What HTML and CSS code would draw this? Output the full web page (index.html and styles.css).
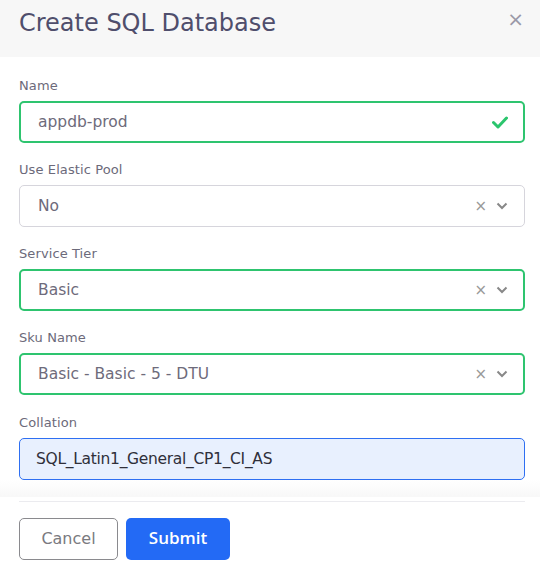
FILE: index.html
```html
<!DOCTYPE html>
<html>
<head>
<meta charset="utf-8">
<link rel="stylesheet" href="styles.css">
</head>
<body>
<div class="modal">
  <div class="header">
    <h1 class="title">Create SQL Database</h1>
    <span class="close">×</span>
  </div>
  <div class="body">
    <div class="field">
      <label class="label">Name</label>
      <div class="control valid">
        <span class="value">appdb-prod</span>
        <svg class="check" width="16" height="13" viewBox="0 0 16 13"><path d="M1.5 6.5 L6 11 L14.5 2" fill="none" stroke="#2bc56d" stroke-width="3" stroke-linecap="round" stroke-linejoin="round"/></svg>
      </div>
    </div>
    <div class="field">
      <label class="label">Use Elastic Pool</label>
      <div class="control">
        <span class="value">No</span>
        <span class="icons"><span class="clear">×</span><svg width="12" height="8" viewBox="0 0 12 8"><path d="M1.5 1.5 L6 6 L10.5 1.5" fill="none" stroke="#888" stroke-width="2"/></svg></span>
      </div>
    </div>
    <div class="field">
      <label class="label">Service Tier</label>
      <div class="control valid">
        <span class="value">Basic</span>
        <span class="icons"><span class="clear">×</span><svg width="12" height="8" viewBox="0 0 12 8"><path d="M1.5 1.5 L6 6 L10.5 1.5" fill="none" stroke="#888" stroke-width="2"/></svg></span>
      </div>
    </div>
    <div class="field wide">
      <label class="label">Sku Name</label>
      <div class="control valid">
        <span class="value">Basic - Basic - 5 - DTU</span>
        <span class="icons"><span class="clear">×</span><svg width="12" height="8" viewBox="0 0 12 8"><path d="M1.5 1.5 L6 6 L10.5 1.5" fill="none" stroke="#888" stroke-width="2"/></svg></span>
      </div>
    </div>
    <div class="field">
      <label class="label">Collation</label>
      <div class="control autofill">
        <span class="value dark narrow">SQL_Latin1_General_CP1_CI_AS</span>
      </div>
    </div>
    <div class="fade"></div>
  </div>
  <div class="footer">
    <button class="btn cancel">Cancel</button>
    <button class="btn submit">Submit</button>
  </div>
</div>
</body>
</html>
```
FILE: styles.css
```css
* { box-sizing: border-box; }
html, body { margin: 0; padding: 0; background: #fff; }
body { font-family: "DejaVu Sans", "Noto Sans", sans-serif; width: 540px; height: 586px; overflow: hidden; }
.modal { width: 540px; }
.header {
  height: 57px;
  background: #f7f7f7;
  display: flex;
  align-items: flex-start;
  justify-content: space-between;
  padding: 8px 16px 0 19px;
}
.title { margin: 0; font-size: 24px; font-weight: 400; color: #4f4e6c; line-height: 30px; }
.close { color: #9a99a8; font-size: 20px; line-height: 20px; margin-top: 1px; }
.body { padding: 19px 15px 0 19px; }
.field { margin-bottom: 17px; }
.field.wide { margin-bottom: 18px; }
.label { display: block; font-size: 13px; line-height: 18px; padding-top: 1px; color: #6c6a7a; margin-bottom: 6px; letter-spacing: 0.1px; }
.control {
  height: 42px;
  border: 1px solid #d6d5dc;
  border-radius: 5px;
  display: flex;
  align-items: center;
  justify-content: space-between;
  padding: 0 16px 0 18px;
  background: #fff;
}
.control.valid { border: 2px solid #2ec46f; padding-left: 17px; padding-right: 15px; }
.control.autofill { background: #e8f0fe; border: 1px solid #2e6ff2; padding-left: 16px; }
.value { font-size: 15.5px; color: #6e6b7b; }
.value.dark { color: #2f2f3a; }
.value.narrow { letter-spacing: -0.3px; }
.icons { display: flex; align-items: center; gap: 9px; }
.clear { color: #999; font-size: 15px; line-height: 15px; }
.fade { height: 17px; margin: -17px -15px 0 -19px; background: linear-gradient(#ffffff00, #f3f3f3); opacity: 0.6; }
.footer { margin: 4px 15px 0 19px; border-top: 1px solid #ebebef; padding-top: 16px; display: flex; gap: 8px; }
.btn { height: 42px; border-radius: 5px; font-family: inherit; font-size: 16px; padding: 0 0 1px; }
.cancel { width: 99px; background: #fff; border: 1px solid #8a8a8e; color: #7a7a80; }
.submit { width: 104px; background: #236af5; border: none; color: #fff; font-weight: 600; font-family: "Open Sans", "DejaVu Sans", sans-serif; font-size: 17px; padding-bottom: 4px; }
```
